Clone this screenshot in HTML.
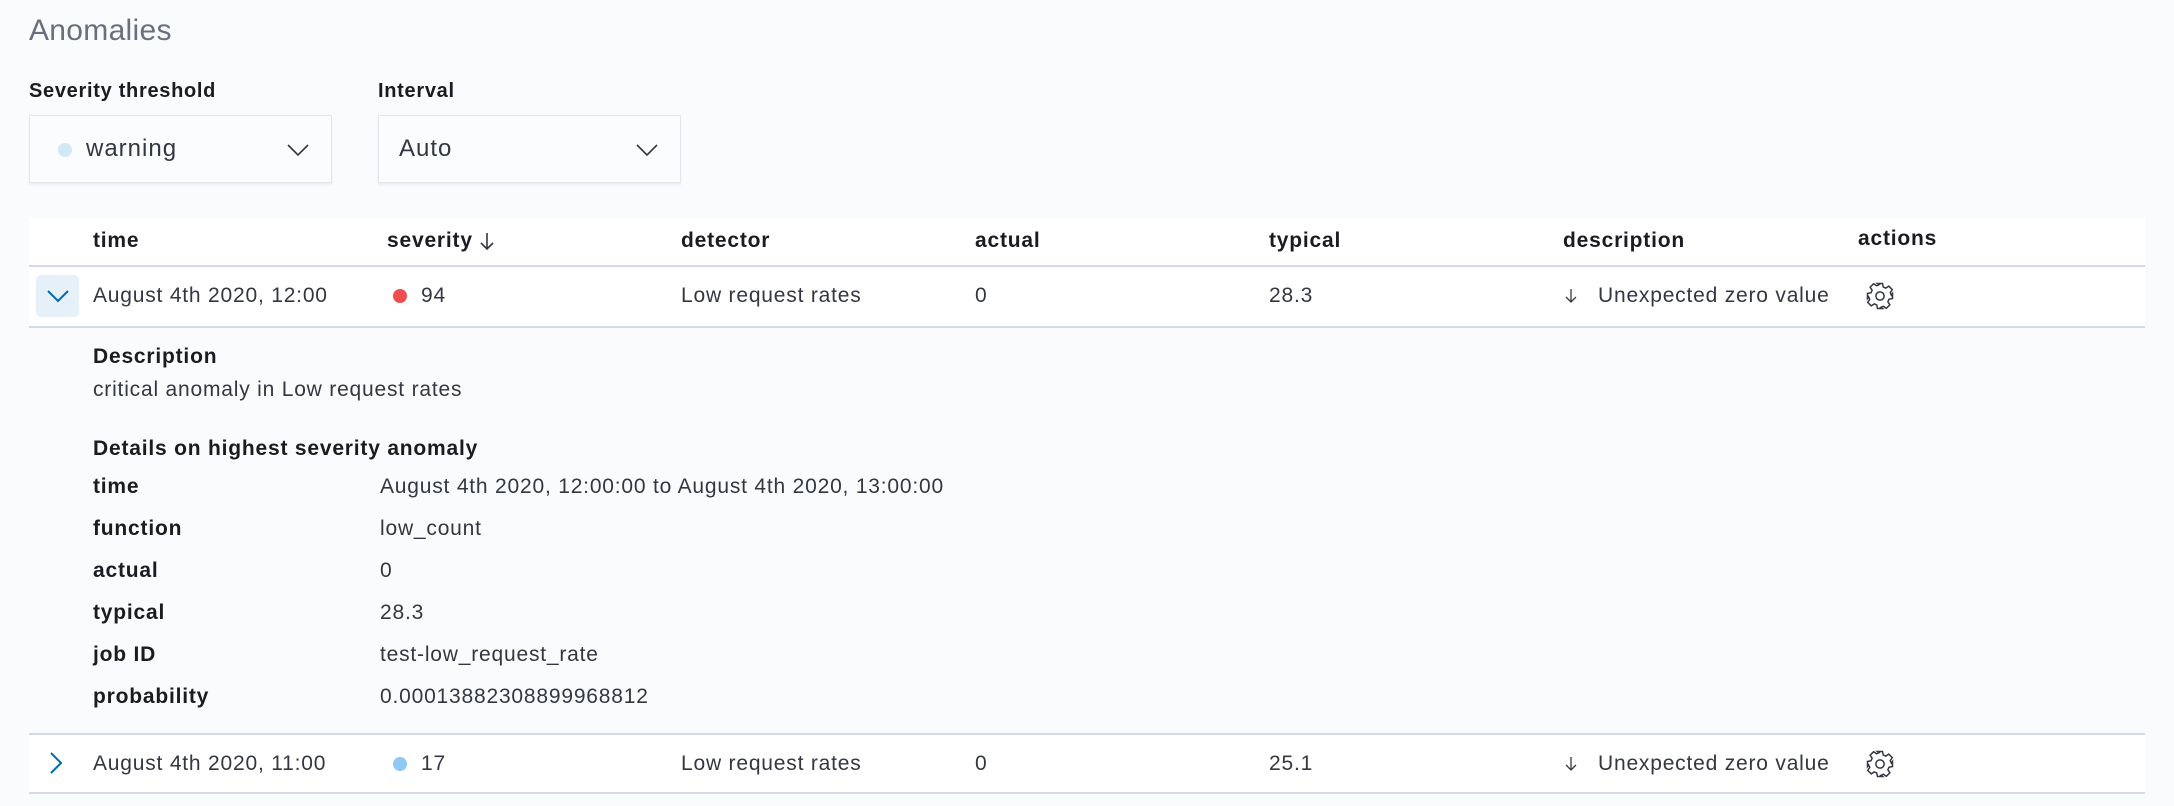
<!DOCTYPE html>
<html><head><style>
body{margin:0;width:2174px;height:806px;background:#fafbfd;font-family:"Liberation Sans",sans-serif;color:#343741;position:relative;overflow:hidden}
.a{position:absolute;white-space:nowrap}
.b{font-weight:bold;color:#1a1c21}
.t{font-size:21px;line-height:24px;letter-spacing:0.8px}
.sel{position:absolute;top:115px;height:68px;width:303px;background:#fbfcfd;border:1px solid #e3e6ec;box-shadow:0 2px 2px rgba(0,0,0,.06);box-sizing:border-box}
.row{position:absolute;left:29px;width:2116px;background:#fff}
.line{position:absolute;left:29px;width:2116px;height:2px;background:#d3dae6}
</style></head><body>
<div class="a" style="left:29px;top:14px;font-size:30px;color:#69707d;letter-spacing:0.3px">Anomalies</div>
<div class="a b" style="left:29px;top:80px;font-size:20px;letter-spacing:0.7px">Severity threshold</div>
<div class="a b" style="left:378px;top:80px;font-size:20px;letter-spacing:0.7px">Interval</div>
<div class="sel" style="left:29px"><span class="a" style="left:28px;top:27px;width:14px;height:14px;border-radius:50%;background:#d1e8f5"></span><span class="a" style="left:56px;top:19px;font-size:24px;letter-spacing:1px">warning</span>
<svg class="a" style="left:256px;top:26px" width="24" height="16"><path d="M2 3l10 10 10-10" stroke="#343741" stroke-width="1.6" fill="none"/></svg></div>
<div class="sel" style="left:378px"><span class="a" style="left:20px;top:19px;font-size:24px;letter-spacing:1px">Auto</span>
<svg class="a" style="left:256px;top:26px" width="24" height="16"><path d="M2 3l10 10 10-10" stroke="#343741" stroke-width="1.6" fill="none"/></svg></div>

<div class="row" style="top:218px;height:48px"></div>
<div class="line" style="top:265px"></div>
<div class="row" style="top:267px;height:59px"></div>
<div class="line" style="top:326px"></div>
<div class="line" style="top:733px"></div>
<div class="row" style="top:735px;height:57px"></div>
<div class="line" style="top:792px"></div>

<div class="a b t" style="left:93px;top:229px">time</div>
<div class="a b t" style="left:387px;top:229px">severity</div>
<svg class="a" style="left:479px;top:231px" width="16" height="20"><path d="M8 2v16M2 12l6 6 6-6" stroke="#343741" stroke-width="1.6" fill="none"/></svg>
<div class="a b t" style="left:681px;top:229px">detector</div>
<div class="a b t" style="left:975px;top:229px">actual</div>
<div class="a b t" style="left:1269px;top:229px">typical</div>
<div class="a b t" style="left:1563px;top:229px">description</div>
<div class="a b t" style="left:1858px;top:227px">actions</div>

<div class="a" style="left:36px;top:275px;width:43px;height:42px;border-radius:5px;background:#e6f0f8"></div>
<svg class="a" style="left:46px;top:288px" width="24" height="16"><path d="M2 3l10 10 10-10" stroke="#006bb4" stroke-width="2" fill="none"/></svg>
<div class="a t" style="left:93px;top:284px">August 4th 2020, 12:00</div>
<span class="a" style="left:393px;top:289px;width:14px;height:14px;border-radius:50%;background:#f04e4e"></span>
<div class="a t" style="left:421px;top:284px">94</div>
<div class="a t" style="left:681px;top:284px">Low request rates</div>
<div class="a t" style="left:975px;top:284px">0</div>
<div class="a t" style="left:1269px;top:284px">28.3</div>
<svg class="a" style="left:1564px;top:288px" width="14" height="16"><path d="M7 1v13M2 9l5 5 5-5" stroke="#343741" stroke-width="1.3" fill="none"/></svg>
<div class="a t" style="left:1598px;top:284px">Unexpected zero value</div>
<svg class="a" style="left:1865px;top:281px" width="30" height="30" viewBox="0 0 24 24"><path d="M10 2h4l.6 2.8 2 .9 2.4-1.6 2.8 2.8-1.6 2.4.9 2L22 10v4l-2.8.6-.9 2 1.6 2.4-2.8 2.8-2.4-1.6-2 .9L14 22h-4l-.6-2.8-2-.9-2.4 1.6-2.8-2.8 1.6-2.4-.9-2L2 14v-4l2.8-.6.9-2-1.6-2.4 2.8-2.8 2.4 1.6 2-.9z" stroke="#343741" stroke-width="1.2" fill="none"/><circle cx="12" cy="12" r="3.3" stroke="#343741" stroke-width="1.2" fill="none"/></svg>

<div class="a b t" style="left:93px;top:345px">Description</div>
<div class="a t" style="left:93px;top:378px">critical anomaly in Low request rates</div>
<div class="a b t" style="left:93px;top:437px">Details on highest severity anomaly</div>
<div class="a b t" style="left:93px;top:475px">time</div><div class="a t" style="left:380px;top:475px">August 4th 2020, 12:00:00 to August 4th 2020, 13:00:00</div>
<div class="a b t" style="left:93px;top:517px">function</div><div class="a t" style="left:380px;top:517px">low_count</div>
<div class="a b t" style="left:93px;top:559px">actual</div><div class="a t" style="left:380px;top:559px">0</div>
<div class="a b t" style="left:93px;top:601px">typical</div><div class="a t" style="left:380px;top:601px">28.3</div>
<div class="a b t" style="left:93px;top:643px">job ID</div><div class="a t" style="left:380px;top:643px">test-low_request_rate</div>
<div class="a b t" style="left:93px;top:685px">probability</div><div class="a t" style="left:380px;top:685px">0.00013882308899968812</div>

<svg class="a" style="left:48px;top:751px" width="16" height="24"><path d="M3 2l10 10-10 10" stroke="#006bb4" stroke-width="2" fill="none"/></svg>
<div class="a t" style="left:93px;top:752px">August 4th 2020, 11:00</div>
<span class="a" style="left:393px;top:757px;width:14px;height:14px;border-radius:50%;background:#8ec8f5"></span>
<div class="a t" style="left:421px;top:752px">17</div>
<div class="a t" style="left:681px;top:752px">Low request rates</div>
<div class="a t" style="left:975px;top:752px">0</div>
<div class="a t" style="left:1269px;top:752px">25.1</div>
<svg class="a" style="left:1564px;top:756px" width="14" height="16"><path d="M7 1v13M2 9l5 5 5-5" stroke="#343741" stroke-width="1.3" fill="none"/></svg>
<div class="a t" style="left:1598px;top:752px">Unexpected zero value</div>
<svg class="a" style="left:1865px;top:749px" width="30" height="30" viewBox="0 0 24 24"><path d="M10 2h4l.6 2.8 2 .9 2.4-1.6 2.8 2.8-1.6 2.4.9 2L22 10v4l-2.8.6-.9 2 1.6 2.4-2.8 2.8-2.4-1.6-2 .9L14 22h-4l-.6-2.8-2-.9-2.4 1.6-2.8-2.8 1.6-2.4-.9-2L2 14v-4l2.8-.6.9-2-1.6-2.4 2.8-2.8 2.4 1.6 2-.9z" stroke="#343741" stroke-width="1.2" fill="none"/><circle cx="12" cy="12" r="3.3" stroke="#343741" stroke-width="1.2" fill="none"/></svg>
</body></html>
